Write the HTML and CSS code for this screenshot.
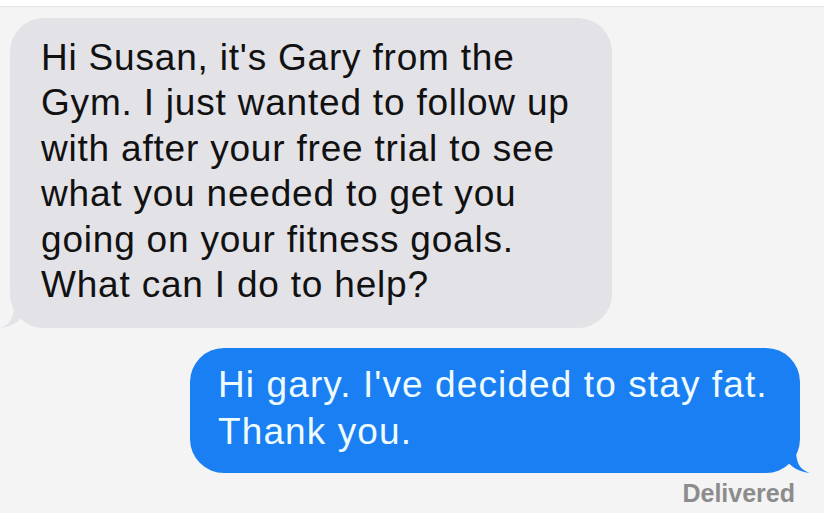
FILE: index.html
```html
<!DOCTYPE html>
<html>
<head>
<meta charset="utf-8">
<link rel="stylesheet" href="styles.css">
</head>
<body>
<div class="page">
  <div class="topbar"></div>
  <div class="thread">
    <div class="row row-in">
      <div class="bubble bubble-in">
        <p class="msg">Hi Susan, it's Gary from the<br>Gym. I just wanted to follow up<br>with after your free trial to see<br>what you needed to get you<br>going on your fitness goals.<br>What can I do to help?</p>
        <svg class="tail tail-in" width="34" height="26" viewBox="0 0 34 26"><path d="M24 0 L24 12 C20 20 10 25 0 26 C12 22 14 14 14 0 Z" fill="#e3e2e7"/></svg>
      </div>
    </div>
    <div class="row row-out">
      <div class="bubble bubble-out">
        <p class="msg msg-out">Hi gary. I've decided to stay fat.<br>Thank you.</p>
        <svg class="tail tail-out" width="34" height="26" viewBox="0 0 34 26"><path d="M10 0 L10 12 C14 20 24 25 34 26 C22 22 20 14 20 0 Z" fill="#1a7ff2"/></svg>
      </div>
    </div>
    <div class="status">Delivered</div>
  </div>
</div>
</body>
</html>
```
FILE: styles.css
```css
html, body {
  margin: 0;
  padding: 0;
  background: #ffffff;
}
.page {
  width: 829px;
  height: 532px;
  display: flex;
  flex-direction: column;
  background: #ffffff;
  font-family: "Liberation Sans", Arial, sans-serif;
}
.topbar {
  height: 6px;
  background: #ffffff;
  border-bottom: 1px solid #e4e4e4;
  width: 824px;
}
.thread {
  width: 824px;
  height: 506px;
  background: #f4f4f4;
  display: flex;
  flex-direction: column;
  box-sizing: border-box;
  padding-top: 11px;
}
.row {
  display: flex;
}
.row-in {
  padding-left: 10px;
}
.row-out {
  justify-content: flex-end;
  padding-right: 24px;
  margin-top: 20px;
}
.bubble {
  position: relative;
  box-sizing: border-box;
}
.bubble-in {
  width: 602px;
  height: 310px;
  background: #e3e2e7;
  border-radius: 34px;
  padding: 17px 0 0 31px;
}
.bubble-out {
  width: 610px;
  height: 125px;
  background: #1a7ff2;
  border-radius: 34px;
  padding: 13px 0 0 28px;
}
.msg {
  margin: 0;
  font-size: 37px;
  line-height: 45.4px;
  color: #111111;
  letter-spacing: 0.8px;
}
.msg-out {
  color: #eefbff;
  line-height: 47px;
  letter-spacing: 1.1px;
}
.tail {
  position: absolute;
  bottom: 0;
}
.tail-in {
  left: -10px;
}
.tail-out {
  right: -10px;
}
.status {
  align-self: flex-end;
  margin-right: 29px;
  margin-top: 6px;
  font-size: 25px;
  font-weight: bold;
  color: #8c8c8c;
}
```
